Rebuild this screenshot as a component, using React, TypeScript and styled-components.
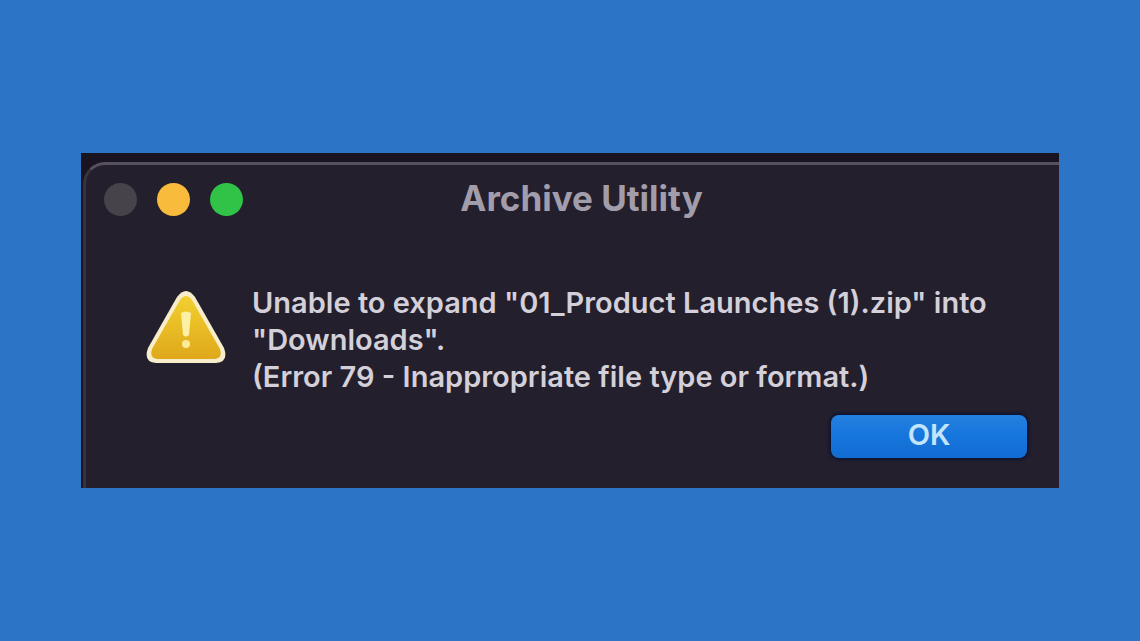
import React from "react";
import styled, { createGlobalStyle } from "styled-components";

const GlobalStyle = createGlobalStyle`
  *, *::before, *::after { box-sizing: border-box; }
  body {
    margin: 0;
    background: #2b74c6;
    font-family: Inter, "Liberation Sans", sans-serif;
  }
`;

const Page = styled.main`
  display: flex;
  flex-direction: column;
  justify-content: center;
  min-height: 100vh;
  padding: 24px 81px;
`;

const Backdrop = styled.div`
  padding: 9px 0 0 2px;
  background: #19141f;
  overflow: hidden;
`;

const Dialog = styled.section`
  padding: 14px 32px 30px 18px;
  border-top: 3px solid #57515e;
  border-left: 3px solid #38343b;
  border-top-left-radius: 22px;
  background: #241f2c;
`;

const TitleBar = styled.header`
  display: grid;
  grid-template-columns: 1fr auto 1fr;
  align-items: center;
  height: 40px;
  margin-right: -32px;
`;

const WindowControls = styled.div`
  display: flex;
  gap: 20px;
`;

const WindowButton = styled.button<{ $color: string }>`
  width: 33px;
  height: 33px;
  padding: 0;
  border: 0;
  border-radius: 50%;
  background: ${(p) => p.$color};
`;

const Title = styled.h1`
  margin: 0;
  padding-bottom: 2px;
  color: #a29dab;
  font-size: 35px;
  font-weight: 700;
  line-height: 38px;
`;

const Content = styled.div`
  display: flex;
  gap: 26px;
  padding: 65px 0 0 42px;
`;

const WarningIcon = styled.svg`
  flex: none;
  width: 80px;
  height: 76px;
  margin-top: 5px;
`;

const Message = styled.p`
  margin: 0;
  color: #d3d0d9;
  font-size: 29px;
  font-weight: 600;
  line-height: 37px;
`;

const Actions = styled.footer`
  display: flex;
  justify-content: flex-end;
  padding-top: 20px;
`;

const PrimaryButton = styled.button`
  width: 196px;
  height: 43px;
  padding: 0 0 3px;
  border: 0;
  border-radius: 8px;
  background: linear-gradient(#2480e0, #1675dc 50%, #126bd2);
  box-shadow: 0 0 3px 2px #0b1434;
  color: #c3e5fb;
  font-family: inherit;
  font-size: 29px;
  font-weight: 600;
  line-height: 36px;
`;

export default function App() {
  return (
    <>
      <GlobalStyle />
      <Page>
        <Backdrop>
          <Dialog role="alertdialog" aria-labelledby="title" aria-describedby="message">
            <TitleBar>
              <WindowControls>
                <WindowButton $color="#47434b" aria-label="Close" disabled />
                <WindowButton $color="#f9bb3c" aria-label="Minimize" />
                <WindowButton $color="#30c348" aria-label="Zoom" />
              </WindowControls>
              <Title id="title">Archive Utility</Title>
            </TitleBar>
            <Content>
              <WarningIcon viewBox="0 0 80 76" aria-hidden="true">
                <defs>
                  <linearGradient id="warning" x1="0" y1="0" x2="0" y2="1">
                    <stop offset="0" stopColor="#f2d02f" />
                    <stop offset="1" stopColor="#dfa81b" />
                  </linearGradient>
                </defs>
                <path
                  d="M31 8Q40-4 49 8L78 59Q83 73 70 74H10Q-3 73 2 59Z"
                  fill="#f8edcb"
                />
                <path
                  d="M34 11Q40 3 46 11L74 60Q77 69 69 70H11Q3 69 6 60Z"
                  fill="url(#warning)"
                />
                <path d="M35 24Q40 21 45 24L43 46Q40 49 37 46Z" fill="#fbf0a4" />
                <circle cx="40" cy="55" r="4" fill="#fbeb96" />
              </WarningIcon>
              <Message id="message">
                Unable to expand "01_Product Launches (1).zip" into
                <br />
                "Downloads".
                <br />
                (Error 79 - Inappropriate file type or format.)
              </Message>
            </Content>
            <Actions>
              <PrimaryButton>OK</PrimaryButton>
            </Actions>
          </Dialog>
        </Backdrop>
      </Page>
    </>
  );
}
